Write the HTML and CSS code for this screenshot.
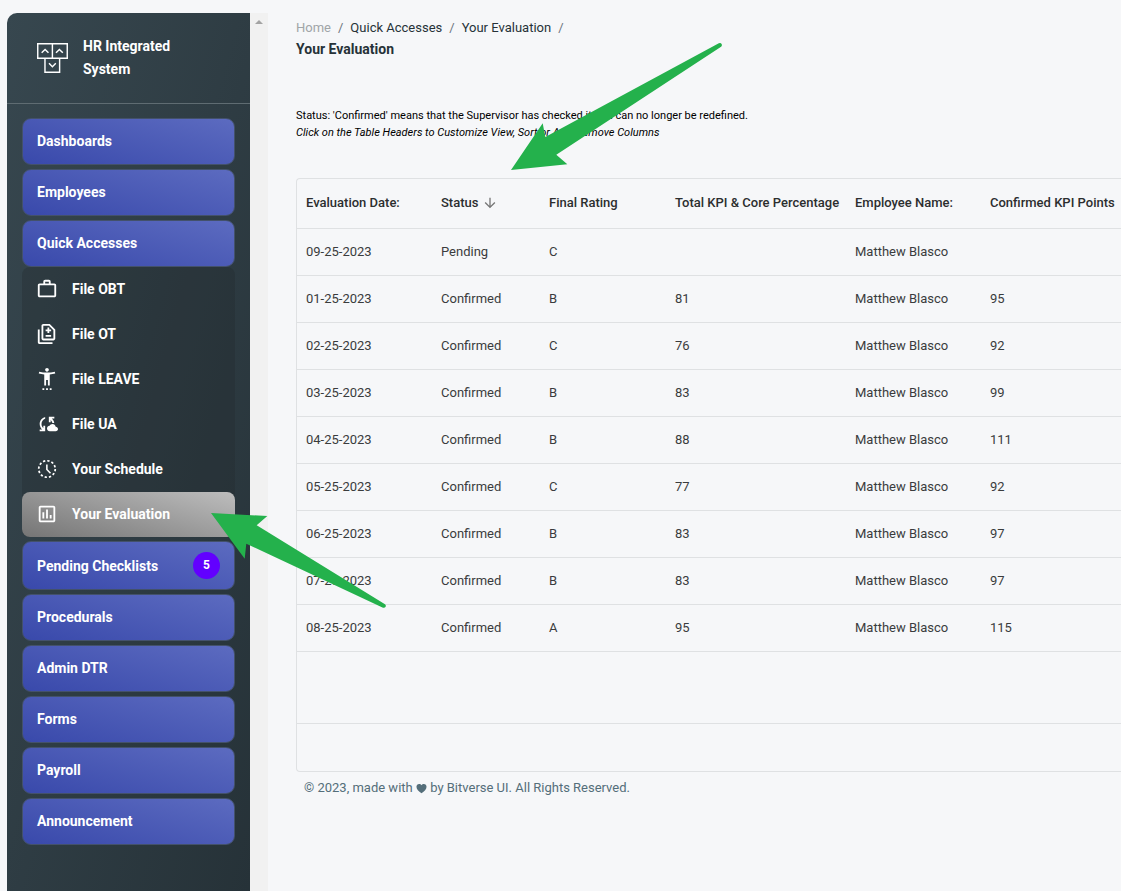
FILE: index.html
```html
<!DOCTYPE html>
<html lang="en">
<head>
<meta charset="utf-8">
<meta name="viewport" content="width=device-width, initial-scale=1">
<title>Your Evaluation - HR Integrated System</title>
<link rel="stylesheet" href="styles.css">
</head>
<body>
<div class="app">
  <aside class="sidebar">
    <a class="brand" href="#">
      <svg class="brand-logo" viewBox="0 0 32 32" aria-hidden="true"><g fill="none" stroke="#fff" stroke-width="1.4"><path d="M1.7 1.7h28.6v14H1.7zM15.9 1.7v14M8.7 15.7h14.2v13.6H8.7z"/><path d="M5.5 10.5l3.3-3.3 3.3 3.3M19.4 10.5l3.3-3.3 3.3 3.3M12.6 20.6l3.3 3.3 3.3-3.3"/></g></svg>
      <span>HR Integrated System</span>
    </a>
    <nav class="menu">
      <button class="group" type="button">Dashboards</button>
      <button class="group" type="button">Employees</button>
      <div class="section">
        <button class="group" type="button" aria-expanded="true">Quick Accesses</button>
        <div class="submenu">
          <a class="item" href="#"><svg class="icon" viewBox="0 0 24 24"><path d="M14 6V4h-4v2h4zM4 8v11h16V8H4zm16-2c1.11 0 2 .89 2 2v11c0 1.11-.89 2-2 2H4c-1.11 0-2-.89-2-2l.01-11c0-1.11.88-2 1.99-2h4V4c0-1.11.89-2 2-2h4c1.11 0 2 .89 2 2v2h4z"/></svg>File OBT</a>
          <a class="item" href="#"><svg class="icon" viewBox="0 0 24 24"><path d="M18 23H4c-1.1 0-2-.9-2-2V7h2v14h14v2zM14.5 7V5h-2v2h-2v2h2v2h2V9h2V7h-2zm2 6h-6v2h6v-2zM15 1H8c-1.1 0-1.99.9-1.99 2L6 17c0 1.1.89 2 1.99 2H19c1.1 0 2-.9 2-2V7l-6-6zm4 16H8V3h6.17L19 7.83V17z"/></svg>File OT</a>
          <a class="item" href="#"><svg class="icon" viewBox="0 0 24 24"><path d="M20.500 4c-2.610.7-5.670 1-8.500 1s-5.890-.3-8.500-1L3 6c1.860.5 4 .83 6 1v12h2v-6h2v6h2V7c2-.17 4.140-.5 6-1l-.5-2zM12 4c1.100 0 2-.9 2-2s-.9-2-2-2-2 .9-2 2 .9 2 2 2zm-5 20h2v-2H7v2zm4 0h2v-2h-2v2zm4 0h2v-2h-2v2z"/></svg>File LEAVE</a>
          <a class="item" href="#"><svg class="icon" viewBox="0 0 24 24"><path d="M21.500 14.980c-.02 0-.03 0-.05.01C21.200 13.300 19.760 12 18 12c-1.400 0-2.600.83-3.160 2.020C13.260 14.100 12 15.400 12 17c0 1.660 1.340 3 3 3l6.500-.02c1.380 0 2.500-1.120 2.500-2.500s-1.120-2.500-2.500-2.500zM10 4.260v2.090C7.670 7.180 6 9.390 6 12c0 1.770.78 3.340 2 4.440V14h2v6H4v-2h2.730C5.060 16.540 4 14.400 4 12c0-3.730 2.550-6.850 6-7.740zM20 6h-2.730c1.430 1.260 2.410 3.010 2.660 5h-2.020c-.23-1.360-.93-2.550-1.910-3.440V10h-2V4h6v2z"/></svg>File UA</a>
          <a class="item" href="#"><svg class="icon" viewBox="0 0 24 24"><circle cx="12" cy="12" r="9" fill="none" stroke="#fff" stroke-width="1.900" stroke-dasharray="2.500 2.212"/><path d="M11 7h1.700v5.200l3.700 3.800-1.200 1.200L11 12.900z"/></svg>Your Schedule</a>
          <a class="item item-active" href="#" aria-current="page"><svg class="icon" viewBox="0 0 24 24"><path d="M9 17H7v-7h2v7zm4 0h-2V7h2v10zm4 0h-2v-4h2v4zm2 2H5V5h14v14zm0-16H5c-1.100 0-2 .9-2 2v14c0 1.100.9 2 2 2h14c1.100 0 2-.9 2-2V5c0-1.100-.9-2-2-2z"/></svg>Your Evaluation</a>
        </div>
      </div>
      <button class="group group-badged" type="button">Pending Checklists <span class="badge">5</span></button>
      <button class="group" type="button">Procedurals</button>
      <button class="group" type="button">Admin DTR</button>
      <button class="group" type="button">Forms</button>
      <button class="group" type="button">Payroll</button>
      <button class="group" type="button">Announcement</button>
    </nav>
  </aside>
  <div class="scrollbar" aria-hidden="true"><span class="scroll-up"></span></div>

  <main class="content">
    <nav class="crumbs" aria-label="Breadcrumb">
      <a class="crumb-home" href="#">Home</a><span>/</span><a href="#">Quick Accesses</a><span>/</span><a href="#">Your Evaluation</a><span>/</span>
    </nav>
    <h1 class="title">Your Evaluation</h1>
    <div class="notes">
      <p>Status: 'Confirmed' means that the Supervisor has checked it and can no longer be redefined.</p>
      <p><em>Click on the Table Headers to Customize View, Sort or Add/Remove Columns</em></p>
    </div>
    <div class="grid">
      <table class="table">
        <colgroup><col class="col-date"><col class="col-status"><col class="col-rating"><col class="col-total"><col class="col-name"><col class="col-points"></colgroup>
        <thead>
          <tr><th>Evaluation Date:</th><th aria-sort="descending"><span class="sorted">Status <svg class="sort" viewBox="0 0 24 24" aria-hidden="true"><path d="M20 12l-1.410-1.410L13 16.170V4h-2v12.170l-5.580-5.590L4 12l8 8 8-8z"/></svg></span></th><th>Final Rating</th><th>Total KPI &amp; Core Percentage</th><th>Employee Name:</th><th>Confirmed KPI Points</th></tr>
        </thead>
        <tbody>
          <tr><td>09-25-2023</td><td>Pending</td><td>C</td><td></td><td>Matthew Blasco</td><td></td></tr>
          <tr><td>01-25-2023</td><td>Confirmed</td><td>B</td><td>81</td><td>Matthew Blasco</td><td>95</td></tr>
          <tr><td>02-25-2023</td><td>Confirmed</td><td>C</td><td>76</td><td>Matthew Blasco</td><td>92</td></tr>
          <tr><td>03-25-2023</td><td>Confirmed</td><td>B</td><td>83</td><td>Matthew Blasco</td><td>99</td></tr>
          <tr><td>04-25-2023</td><td>Confirmed</td><td>B</td><td>88</td><td>Matthew Blasco</td><td>111</td></tr>
          <tr><td>05-25-2023</td><td>Confirmed</td><td>C</td><td>77</td><td>Matthew Blasco</td><td>92</td></tr>
          <tr><td>06-25-2023</td><td>Confirmed</td><td>B</td><td>83</td><td>Matthew Blasco</td><td>97</td></tr>
          <tr><td>07-25-2023</td><td>Confirmed</td><td>B</td><td>83</td><td>Matthew Blasco</td><td>97</td></tr>
          <tr><td>08-25-2023</td><td>Confirmed</td><td>A</td><td>95</td><td>Matthew Blasco</td><td>115</td></tr>
        </tbody>
      </table>
      <div class="grid-space"></div>
      <div class="grid-footer"></div>
    </div>
    <footer class="footer">© 2023, made with <svg class="heart" viewBox="0 0 24 24" role="img" aria-label="love"><path d="M12 22.500C5.500 18 1 13.500 1 8c0-3.500 2.500-6 5.700-6C9 2 11 3 12 5c1-2 3-3 5.300-3C20.500 2 23 4.500 23 8c0 5.500-4.500 10-11 14.500z"/></svg> by Bitverse UI. All Rights Reserved.</footer>
  </main>
</div>
<svg class="pointer pointer-table" viewBox="0 0 212 128" aria-hidden="true"><path d="M1 128L32.700 81.300l2.600 13.700L208.800 1.300q2-.8 2.800.8t-.5 2.700L46.300 112.700l11 9.600z"/></svg>
<svg class="pointer pointer-menu" viewBox="0 0 176 97" aria-hidden="true"><path d="M1 1l56.300 3-10.600 9.300L175 92.200q1.300 1 .6 2.500t-2.600 1L36.300 31.700l-1.600 15z"/></svg>
</body>
</html>
```

FILE: styles.css
```css
* { box-sizing: border-box; }

body {
  margin: 0;
  height: 100vh;
  overflow: hidden;
  position: relative;
  background: #f6f7f9;
  color: #263238;
  font: 13px/20px Roboto, "Liberation Sans", sans-serif;
}

a { color: inherit; text-decoration: none; }
p, h1 { margin: 0; }

.app { display: flex; height: 100%; padding: 13px 0 0 7px; }

.sidebar {
  flex: 0 0 243px;
  overflow: hidden;
  border-radius: 10px 0 0 0;
  background: linear-gradient(to bottom right, #37474f, #263238);
  color: #fff;
}

.brand {
  display: flex;
  align-items: center;
  gap: 14px;
  padding: 22px 70px 22px 29px;
  border-bottom: 1px solid #5f6c72;
  font-size: 14px;
  font-weight: 700;
  line-height: 23px;
}
.brand-logo { flex: none; width: 33px; height: 33px; }

.menu { display: flex; flex-direction: column; gap: 4px; padding: 14px 15px; }

.group {
  display: flex;
  align-items: center;
  width: 100%;
  height: 47px;
  padding: 0 14px 2px;
  border: 1px solid #43516b;
  border-radius: 9px;
  background: linear-gradient(195deg, #5c6bc0, #3949ab);
  color: #fff;
  font: 700 14px/20px Roboto, "Liberation Sans", sans-serif;
  text-align: left;
}
.group-badged { justify-content: space-between; height: 49px; padding-bottom: 0; }

.badge {
  width: 27px;
  height: 27px;
  border-radius: 50%;
  background: #6200ff;
  font-size: 12px;
  line-height: 27px;
  text-align: center;
}

.submenu { border-radius: 8px; background: rgba(32, 40, 44, 0.3); }

.item {
  display: flex;
  align-items: center;
  gap: 14px;
  height: 45px;
  padding: 0 14px 2px;
  font-size: 14px;
  font-weight: 700;
}
.item-active {
  border-radius: 8px;
  background: linear-gradient(195deg, #bdbdbd, #757575);
}
.icon { width: 22px; height: 22px; fill: #fff; }

.scrollbar { flex: 0 0 17px; padding: 7px 5px; background: #f1f1f1; }
.scroll-up {
  display: block;
  border: solid transparent;
  border-width: 0 4px 4px;
  border-bottom-color: #a3a3a3;
}

.content { flex: 1; min-width: 0; padding: 4px 0 0 28px; }

.crumbs { display: flex; gap: 7px; line-height: 22px; }
.crumbs span { color: #6c757d; }
.crumbs .crumb-home { color: #a0a5a8; }

.title { font-size: 14px; font-weight: 700; line-height: 20px; }

.notes { padding: 48px 0 37px; color: #000; font-size: 11px; line-height: 17px; }

.grid {
  overflow: hidden;
  border: 1px solid #dfe1e3;
  border-right: 0;
  border-radius: 4px 0 0 4px;
  color: #3a3c3d;
}
.table { width: 100%; min-width: 864px; table-layout: fixed; border-collapse: collapse; }
.col-date, .col-name { width: 135px; }
.col-status { width: 108px; }
.col-rating { width: 126px; }
.col-total { width: 180px; }

th, td {
  height: 47px;
  padding: 0 9px;
  border-bottom: 1px solid #dfe1e3;
  text-align: left;
  white-space: nowrap;
}
th { height: 49px; color: #2c2e2f; font-weight: 500; }
.sorted { display: flex; align-items: center; gap: 4px; }
.sort { width: 16px; height: 16px; fill: #777; }

.grid-space { height: 72px; border-bottom: 1px solid #dfe1e3; }
.grid-footer { height: 47px; }

.footer { padding: 6px 8px; color: #546e7a; }
.heart { width: 11px; height: 11px; fill: #546e7a; vertical-align: -2px; }

.pointer { position: absolute; fill: #24b14c; pointer-events: none; }
.pointer-table { left: 510px; top: 42px; width: 212px; height: 128px; }
.pointer-menu { left: 210px; top: 512px; width: 176px; height: 97px; }
```
